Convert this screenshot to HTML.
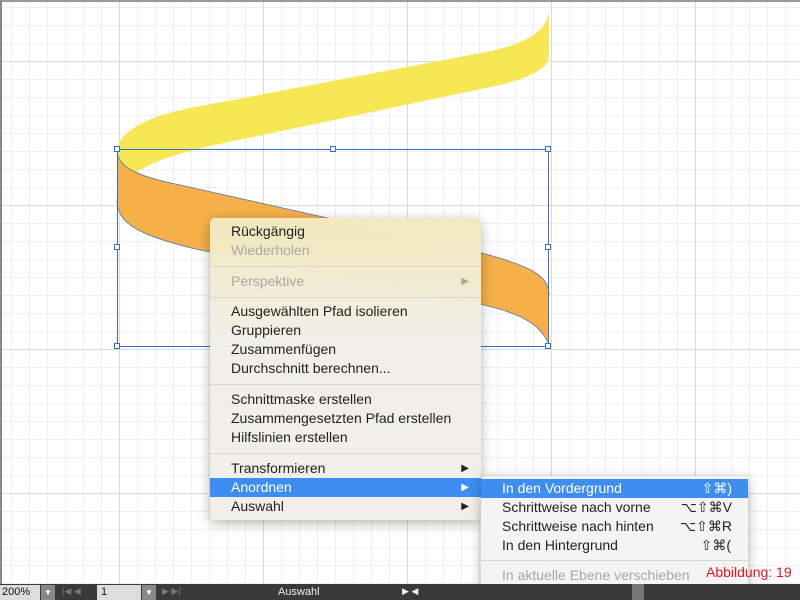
<!DOCTYPE html>
<html><head><meta charset="utf-8"><style>
*{margin:0;padding:0;box-sizing:border-box}
body{width:800px;height:600px;overflow:hidden;position:relative;background:#fff;font-family:"Liberation Sans",sans-serif}
.grid{position:absolute;left:0;top:0;width:800px;height:584px;
background-image:linear-gradient(90deg,#dadada 1px,transparent 1px),linear-gradient(#dadada 1px,transparent 1px),linear-gradient(90deg,#efefef 1px,transparent 1px),linear-gradient(#efefef 1px,transparent 1px);
background-size:144px 144px,144px 144px,18px 18px,18px 18px;
background-position:117px 0,0 59px,9px 0,0 5px;border-left:2px solid #888;border-top:2px solid #999}
.menu{position:absolute;left:210px;top:218px;width:271px;height:302px;background:rgba(240,238,232,0.96);border-radius:5px;box-shadow:0 3px 12px rgba(0,0,0,.3);font-size:14px;color:#222}
.menu .top{position:absolute;left:0;top:0;width:100%;height:120px;border-radius:5px 5px 0 0;background:linear-gradient(180deg,rgba(243,229,160,.6),rgba(240,238,232,0))}
.it{position:absolute;left:21px;height:19px;line-height:19px;white-space:nowrap}
.dis{color:#a8a8a0}
.sep{position:absolute;left:0;width:100%;height:1px;background:#d8d6d0}
.arr{position:absolute;right:12px;font-size:10px}
.hl{position:absolute;left:0;width:100%;height:19px;background:#3d8ef0}
.sub{position:absolute;left:481px;top:476px;width:267px;height:114px;background:rgba(244,244,244,.97);border-radius:5px;box-shadow:0 3px 12px rgba(0,0,0,.3);font-size:14px;color:#222}
.sc{position:absolute;right:16px;height:19px;line-height:19px}
.bar{position:absolute;left:0;top:584px;width:800px;height:16px;background:#3a3a3a;font-size:11px;color:#eee}
</style></head><body>
<div class="grid"></div>
<svg width="800" height="600" style="position:absolute;left:0;top:0">
<path d="M549 8 C549 30 530 45 470 55 L190 108 C140 118 118 135 117 150 L117 200 C120 175 150 160 210 146 L500 85 C540 75 549 65 549 55 Z" fill="#f6e854"/>
<path d="M117 150 C118 165 130 175 180 185 L470 250 C530 265 549 275 549 295 L549 345 C540 320 510 310 470 302 L200 250 C135 235 117 222 117 200 Z" fill="#f6b04a"/>
<path d="M117 150 C118 165 130 175 180 185 L470 250 C530 265 549 275 549 295 M117 200 C117 222 135 235 200 250 L470 302 C510 310 540 320 549 345" fill="none" stroke="#5577aa" stroke-width="0.8"/>
<rect x="117.5" y="149.5" width="431" height="197" fill="none" stroke="#3a6fc8" stroke-width="1"/>
<g fill="#fff" stroke="#3a6fc8"><rect x="114.5" y="146.5" width="5" height="5"/><rect x="330.5" y="146.5" width="5" height="5"/><rect x="545.5" y="146.5" width="5" height="5"/><rect x="114.5" y="244.5" width="5" height="5"/><rect x="545.5" y="244.5" width="5" height="5"/><rect x="114.5" y="343.5" width="5" height="5"/><rect x="545.5" y="343.5" width="5" height="5"/></g>
</svg>
<div class="menu"><div class="top"></div>
<div class="it" style="top:4px">Rückgängig</div>
<div class="it dis" style="top:23px">Wiederholen</div>
<div class="sep" style="top:48px"></div>
<div class="it dis" style="top:54px">Perspektive</div><div class="arr dis" style="top:58px">▶</div>
<div class="sep" style="top:79px"></div>
<div class="it" style="top:84px">Ausgewählten Pfad isolieren</div>
<div class="it" style="top:103px">Gruppieren</div>
<div class="it" style="top:122px">Zusammenfügen</div>
<div class="it" style="top:141px">Durchschnitt berechnen...</div>
<div class="sep" style="top:166px"></div>
<div class="it" style="top:172px">Schnittmaske erstellen</div>
<div class="it" style="top:191px">Zusammengesetzten Pfad erstellen</div>
<div class="it" style="top:210px">Hilfslinien erstellen</div>
<div class="sep" style="top:235px"></div>
<div class="it" style="top:241px">Transformieren</div><div class="arr" style="top:245px">▶</div>
<div class="hl" style="top:260px"></div>
<div class="it" style="top:260px;color:#fff">Anordnen</div><div class="arr" style="top:264px;color:#fff">▶</div>
<div class="it" style="top:279px">Auswahl</div><div class="arr" style="top:283px">▶</div>
</div>
<div class="sub">
<div class="hl" style="top:3px"></div>
<div class="it" style="top:3px;color:#fff">In den Vordergrund</div><div class="sc" style="top:3px;color:#fff;right:16px">⇧⌘)</div>
<div class="it" style="top:22px">Schrittweise nach vorne</div><div class="sc" style="top:22px">⌥⇧⌘V</div>
<div class="it" style="top:41px">Schrittweise nach hinten</div><div class="sc" style="top:41px">⌥⇧⌘R</div>
<div class="it" style="top:60px">In den Hintergrund</div><div class="sc" style="top:60px;right:17px">⇧⌘(</div>
<div class="sep" style="top:84px"></div>
<div class="it dis" style="top:90px">In aktuelle Ebene verschieben</div>
</div>
<div style="position:absolute;left:706px;top:564px;color:#e8141c;font-size:14px">Abbildung: 19</div>
<div class="bar">
<div style="position:absolute;left:0;top:1px;width:40px;height:15px;background:#ddd;color:#111;padding-left:2px;line-height:15px">200%</div>
<div style="position:absolute;left:41px;top:1px;width:14px;height:15px;background:#888;color:#fff;font-size:8px;text-align:center;line-height:15px">▼</div>
<div style="position:absolute;left:62px;top:2px;color:#777;font-size:9px">|◀ ◀</div>
<div style="position:absolute;left:97px;top:1px;width:44px;height:15px;background:#ddd;color:#111;padding-left:4px;line-height:15px">1</div>
<div style="position:absolute;left:142px;top:1px;width:14px;height:15px;background:#888;color:#fff;font-size:8px;text-align:center;line-height:15px">▼</div>
<div style="position:absolute;left:162px;top:2px;color:#777;font-size:9px">▶ ▶|</div>
<div style="position:absolute;left:278px;top:2px">Auswahl</div>
<div style="position:absolute;left:402px;top:2px;font-size:9px">▶ ◀</div>
<div style="position:absolute;left:632px;top:0;width:12px;height:16px;background:#777"></div>
</div>
</body></html>
